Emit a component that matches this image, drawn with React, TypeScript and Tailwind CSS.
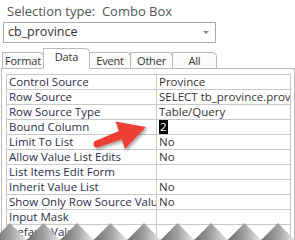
import React from 'react';

// Property sheet rows (label / value)
const rows: { label: string; value: string; selected?: boolean }[] = [
  { label: 'Control Source', value: 'Province' },
  { label: 'Row Source', value: 'SELECT tb_province.province_id, tb_province.province' },
  { label: 'Row Source Type', value: 'Table/Query' },
  { label: 'Bound Column', value: '2', selected: true },
  { label: 'Limit To List', value: 'No' },
  { label: 'Allow Value List Edits', value: 'No' },
  { label: 'List Items Edit Form', value: '' },
  { label: 'Inherit Value List', value: 'No' },
  { label: 'Show Only Row Source Values', value: 'No' },
  { label: 'Input Mask', value: '' },
  { label: 'Default Value', value: '' },
];

const tabs = [
  { name: 'Format', w: 'w-[42px]' },
  { name: 'Data', w: 'w-[47px]', active: true },
  { name: 'Event', w: 'w-[42px]' },
  { name: 'Other', w: 'w-[43px]' },
  { name: 'All', w: 'w-[45px]' },
];

const peaks = Array.from({ length: 10 }, (_, i) => 10 + i * 33.5);

const App: React.FC = () => {
  return (
    <div className="relative w-[295px] h-[240px] overflow-hidden bg-white font-['Open_Sans',sans-serif] text-[11px]">
      {/* Header */}
      <div className="h-[22px] pl-[7px] pt-[3px] text-[13px] leading-[16px] text-[#555] whitespace-pre">
        {'Selection type:  Combo Box'}
      </div>

      {/* Combo */}
      <div className="ml-[3px] w-[213px] h-[21px] border border-[#ababab] flex items-center justify-between pl-[4px] pr-[6px] text-[12.5px] text-[#333]">
        <span>cb_province</span>
        <span className="w-0 h-0 border-l-[3px] border-r-[3px] border-t-[3px] border-l-transparent border-r-transparent border-t-[#888]"></span>
      </div>

      {/* Tabs */}
      <div className="mt-[5px] ml-[2px] h-[20px] flex items-end relative z-10">
        {tabs.map((t) => (
          <div
            key={t.name}
            className={`${t.w} shrink-0 flex items-center justify-center border border-[#b9b9b9] rounded-tr-[5px] text-[11px] tracking-[-0.2px] text-[#333] leading-[14px] whitespace-nowrap ${
              t.active
                ? 'relative z-10 h-[21px] -mb-px -ml-px bg-white border-b-white pb-[4px]'
                : 'h-[16px] -ml-px first:ml-0 bg-[#fafafa] border-b-0'
            }`}
          >
            {t.name}
          </div>
        ))}
      </div>

      {/* Panel */}
      <div className="ml-[1px] w-[294px] border-t border-l border-r border-[#b9b9b9] pl-[4px] pt-[5px] pr-[3px]">
        <div className="w-[285px] border-t border-l border-r border-[#c8c8c8]">
          {rows.map((r) => (
            <div key={r.label} className="flex h-[15px] border-b border-[#c8c8c8] leading-[14px] text-[11.5px]">
              <div className="w-[150px] shrink-0 border-r border-[#c8c8c8] pl-[2px] overflow-hidden whitespace-nowrap text-[#2e2e48]">
                {r.label}
              </div>
              <div className="flex-1 pl-[2px] overflow-hidden whitespace-nowrap text-[#333]">
                {r.selected ? (
                  <span className="bg-black text-white px-px">{r.value}</span>
                ) : (
                  r.value
                )}
              </div>
            </div>
          ))}
        </div>
      </div>

      {/* Red callout arrow and torn bottom edge */}
      <svg className="absolute left-0 top-0 pointer-events-none" width="295" height="240" viewBox="0 0 295 240">
        <defs>
          <filter id="sh" x="-20%" y="-20%" width="140%" height="140%">
            <feDropShadow dx="1.5" dy="2" stdDeviation="1.5" floodColor="#000" floodOpacity="0.35" />
          </filter>
          <linearGradient id="tri" x1="0" y1="0" x2="1" y2="0">
            <stop offset="0" stopColor="#6f6f6f" />
            <stop offset="0.5" stopColor="#a0a0a0" />
            <stop offset="1" stopColor="#e8e8e8" />
          </linearGradient>
        </defs>
        <g filter="url(#sh)" fill="#ea3f35">
          <polygon points="95.9,140.7 118.9,130.9 115.5,121.5 146,127 125,149 121.7,139.5 98.1,147.3" />
          <circle cx="97" cy="144" r="3.5" />
        </g>
        {peaks.map((p) => (
          <polygon key={p} points={`${p - 16.75},240 ${p},223 ${p + 16.75},240`} fill="url(#tri)" />
        ))}
      </svg>
    </div>
  );
};

export default App;
